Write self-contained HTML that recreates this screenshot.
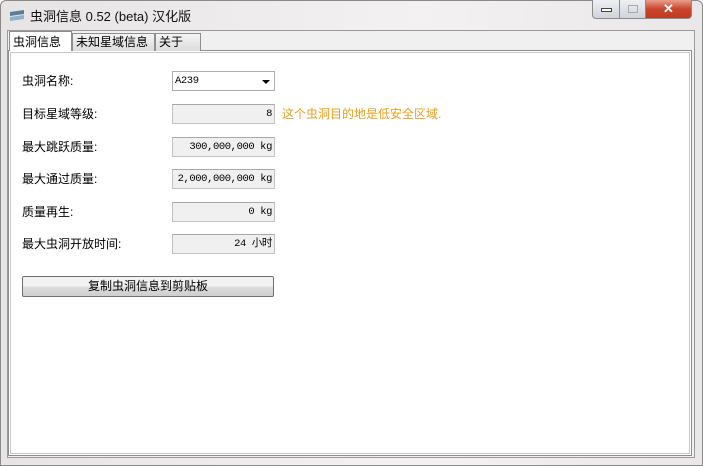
<!DOCTYPE html>
<html><head><meta charset="utf-8"><style>
*{margin:0;padding:0;box-sizing:border-box}
body{width:703px;height:466px;overflow:hidden;background:#fff;font-family:"Liberation Sans","Noto Sans CJK SC",sans-serif;font-size:12px;color:#000;position:relative}
.frame{position:absolute;left:0;top:0;width:703px;height:466px;background:linear-gradient(90deg,#e6e4e4,#f3f1f1 60%,#e9e7e7);border:1px solid #8a8a8a;border-radius:6px 6px 0 0}
.title{position:absolute;left:30px;top:6px;font-size:13px;color:#111}
.client{position:absolute;left:7px;top:30px;width:688px;height:428px;background:#f0f0f0;border:1px solid #9a9a9a}
.panel{position:absolute;left:8px;top:50px;width:684px;height:406px;background:#fff;border:1px solid #8e8e8e;box-shadow:inset 0 0 0 1px #fff,inset 0 0 0 2px #c8c8c8}
.tab{position:absolute;top:33px;height:18px;border:1px solid #8e8e8e;border-bottom:none;background:linear-gradient(#f4f4f4,#dcdcdc);font-size:12px;line-height:16px;padding:0 3px}
.tab.a{background:#fff;top:31px;height:20px;line-height:20px;z-index:2}
.lbl{position:absolute;left:22px;font-size:12px}
.f{position:absolute;left:172px;width:103px;height:20px;background:#f0f0f0;border:1px solid #c4c4c4;border-top-color:#a8a8a8;text-align:right;padding-right:2px;line-height:18px;font-family:"Liberation Mono","Noto Sans CJK SC",monospace;font-size:10.5px;letter-spacing:-0.4px;white-space:nowrap;overflow:hidden}
.btn{position:absolute;left:22px;top:276px;width:252px;height:21px;border:1px solid #707070;border-radius:2px;background:linear-gradient(#f2f2f2 50%,#dddddd 50%,#cfcfcf);text-align:center;line-height:19px}
.wb{position:absolute;top:0;height:19px;border:1px solid #8b8b8b;border-top:none}
</style></head><body>
<div class="frame"></div>
<svg style="position:absolute;left:9px;top:8px" width="16" height="14"><path d="M1 4 L15 2 L15 6 L1 8Z" fill="#5c7d96"/><path d="M1 9 L15 7 L15 11 L1 13Z" fill="#8fb0c8"/></svg>
<div class="title">虫洞信息 0.52 (beta) 汉化版</div>
<div class="wb" style="left:592px;width:28px;border-radius:0 0 0 4px;background:linear-gradient(#eef0f3,#cfd4da)"><div style="position:absolute;left:8px;top:8px;width:11px;height:4px;border:1px solid #444;background:#fff"></div></div>
<div class="wb" style="left:619px;width:27px;background:linear-gradient(#eef0f3,#cfd4da)"><div style="position:absolute;left:8px;top:5px;width:10px;height:8px;border:1px solid #aaa"></div></div>
<div class="wb" style="left:645px;width:47px;border-radius:0 0 4px 0;background:linear-gradient(#e8a08c,#c8452c 50%,#c23a20);color:#fff;font-weight:bold;text-align:center;line-height:17px;font-size:13px">✕</div>
<div class="client"></div>
<div class="panel"></div>
<div class="tab a" style="left:9px;width:63px">虫洞信息</div>
<div class="tab" style="left:72px;width:83px">未知星域信息</div>
<div class="tab" style="left:155px;width:46px">关于</div>
<div class="lbl" style="top:72px">虫洞名称:</div>
<div class="f" style="top:71px;background:#fff;text-align:left;padding-left:2px;border-color:#abadb3">A239<span style="position:absolute;right:4px;top:8px;border:4px solid transparent;border-top:4px solid #000;border-bottom:none"></span></div>
<div class="lbl" style="top:105px">目标星域等级:</div>
<div class="f" style="top:104px">8</div>
<div style="position:absolute;left:282px;top:105px;color:#e8a020;font-size:12px">这个虫洞目的地是低安全区域.</div>
<div class="lbl" style="top:138px">最大跳跃质量:</div>
<div class="f" style="top:137px">300,000,000 kg</div>
<div class="lbl" style="top:170px">最大通过质量:</div>
<div class="f" style="top:169px">2,000,000,000 kg</div>
<div class="lbl" style="top:203px">质量再生:</div>
<div class="f" style="top:202px">0 kg</div>
<div class="lbl" style="top:235px">最大虫洞开放时间:</div>
<div class="f" style="top:234px">24 小时</div>
<div class="btn">复制虫洞信息到剪贴板</div>
</body></html>
